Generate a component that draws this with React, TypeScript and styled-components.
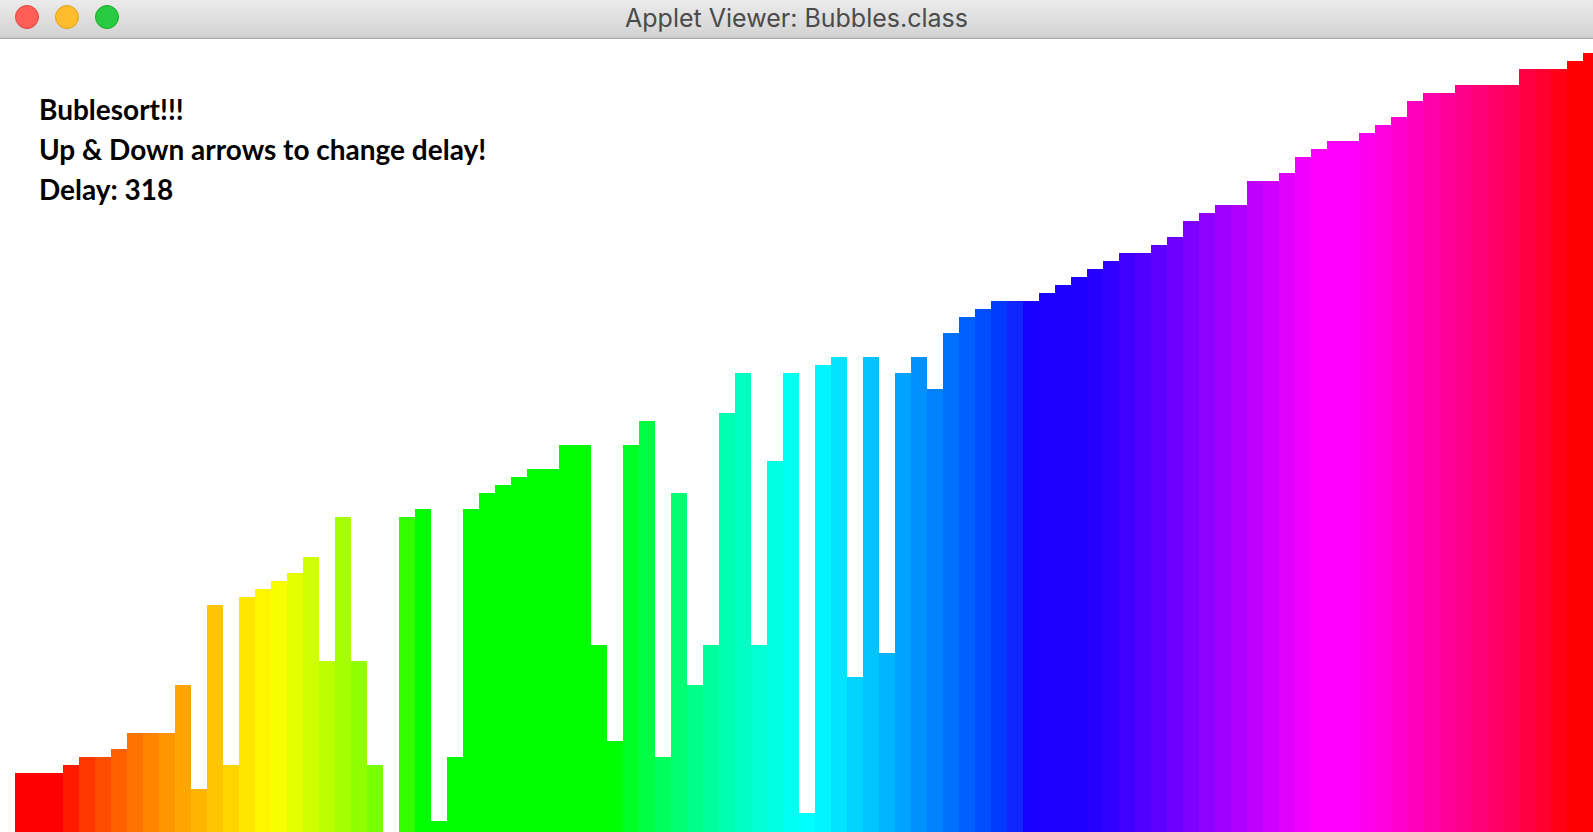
import React from 'react';
import styled, { createGlobalStyle } from 'styled-components';

const GlobalStyle = createGlobalStyle`
  * { box-sizing: border-box; }
  html, body, #root { height: 100%; }
  body { margin: 0; overflow: hidden; background: #fff; }
`;

const Window = styled.div`
  display: flex;
  flex-direction: column;
  height: 100%;
`;

const TitleBar = styled.header`
  display: grid;
  grid-template-columns: 1fr auto 1fr;
  flex: none;
  height: 39px;
  padding: 0 15px 4px;
  align-items: center;
  background: linear-gradient(#ebebeb, #d2d2d2);
  border-bottom: 1px solid #acacac;
  box-shadow: inset 0 -1px #c6c6c6;
`;

const Controls = styled.div`
  display: flex;
  gap: 16px;
`;

const ControlButton = styled.button<{ $fill: string; $edge: string }>`
  width: 24px;
  height: 24px;
  padding: 0;
  border: 1px solid ${(p) => p.$edge};
  border-radius: 50%;
  background: ${(p) => p.$fill};
`;

const Title = styled.h1`
  margin: 0;
  padding-top: 2px;
  font: 400 25px/32px Inter, "Liberation Sans", sans-serif;
  color: #4b4b4b;
`;

const Canvas = styled.main`
  display: grid;
  flex: 1;
  min-height: 0;
`;

const Info = styled.section`
  grid-area: 1 / 1;
  z-index: 1;
  padding: 50px 39px;
`;

const InfoLine = styled.p`
  margin: 0;
  font: 700 28px/40px Lato, sans-serif;
  color: #000;
`;

const Chart = styled.div`
  grid-area: 1 / 1;
  display: grid;
  grid-template-columns: repeat(99, 16fr);
  align-items: end;
  min-width: 0;
  min-height: 0;
  margin: 0 -6px 0 15px;
`;

const Bar = styled.div`
  min-width: 0;
`;

const UNIT = 8;
const FLOOR = 3;

const values = [
  7, 7, 7, 8, 9, 9, 10, 12, 12, 12, 18, 5, 28, 8, 29, 30, 31, 32, 34, 21,
  39, 21, 8, 0, 39, 40, 1, 9, 40, 42, 43, 44, 45, 45, 48, 48, 23, 11, 48, 51,
  9, 42, 18, 23, 52, 57, 23, 46, 57, 2, 58, 59, 19, 59, 22, 57, 59, 55, 62, 64,
  65, 66, 66, 66, 67, 68, 69, 70, 71, 72, 72, 73, 74, 76, 77, 78, 78, 81, 81, 82,
  84, 85, 86, 86, 87, 88, 89, 91, 92, 92, 93, 93, 93, 93, 95, 95, 95, 96, 97,
];

const colors = [
  '#ff0000', '#ff0000', '#ff0000', '#ff1a00', '#ff3600', '#ff4d00', '#ff6000', '#ff7300', '#ff8400', '#ff9500',
  '#ffa500', '#ffb500', '#ffc500', '#ffd500', '#ffe600', '#fff600', '#f8ff00', '#e4ff00', '#cfff00', '#bbff00',
  '#a6ff00', '#90ff00', '#78ff00', '#5cff00', '#33ff00', '#00ff00', '#00ff00', '#00ff00', '#00ff00', '#00ff00',
  '#00ff00', '#00ff00', '#00ff00', '#00ff00', '#00ff00', '#00ff00', '#00ff00', '#00ff00', '#00ff26', '#00ff43',
  '#00ff5c', '#00ff73', '#00ff88', '#00ff9c', '#00ffaf', '#00ffc2', '#00ffd3', '#00ffe3', '#00fff3', '#00ffff',
  '#00f5ff', '#00e4ff', '#00d4ff', '#00c4ff', '#00b4ff', '#00a3ff', '#0093ff', '#0082ff', '#0071ff', '#0060ff',
  '#004eff', '#003aff', '#1026ff', '#1800ff', '#1c00ff', '#1d00ff', '#1e00ff', '#2600ff', '#3200ff', '#4000ff',
  '#4f00ff', '#5e00ff', '#6e00ff', '#7e00ff', '#8e00ff', '#9e00ff', '#af00ff', '#bf00ff', '#cf00ff', '#e000ff',
  '#f000ff', '#ff00ff', '#ff00ff', '#ff00ff', '#ff00ef', '#ff00de', '#ff00ce', '#ff00bd', '#ff00ac', '#ff009b',
  '#ff008a', '#ff0079', '#ff0069', '#ff0058', '#ff0045', '#ff0031', '#ff0017', '#ff0000', '#ff0000',
];

const controls = [
  { label: 'Close', fill: '#ff5f57', edge: '#e2463f' },
  { label: 'Minimize', fill: '#ffbd2e', edge: '#e1a116' },
  { label: 'Zoom', fill: '#28ca42', edge: '#1aab29' },
];

export default function App() {
  return (
    <Window>
      <GlobalStyle />
      <TitleBar>
        <Controls>
          {controls.map((c) => (
            <ControlButton key={c.label} type="button" aria-label={c.label} $fill={c.fill} $edge={c.edge} />
          ))}
        </Controls>
        <Title>Applet Viewer: Bubbles.class</Title>
      </TitleBar>
      <Canvas>
        <Info>
          <InfoLine>Bublesort!!!</InfoLine>
          <InfoLine>Up &amp; Down arrows to change delay!</InfoLine>
          <InfoLine>Delay: 318</InfoLine>
        </Info>
        <Chart>
          {values.map((v, i) => (
            <Bar key={i} style={{ height: v ? v * UNIT + FLOOR : 0, background: colors[i] }} />
          ))}
        </Chart>
      </Canvas>
    </Window>
  );
}
